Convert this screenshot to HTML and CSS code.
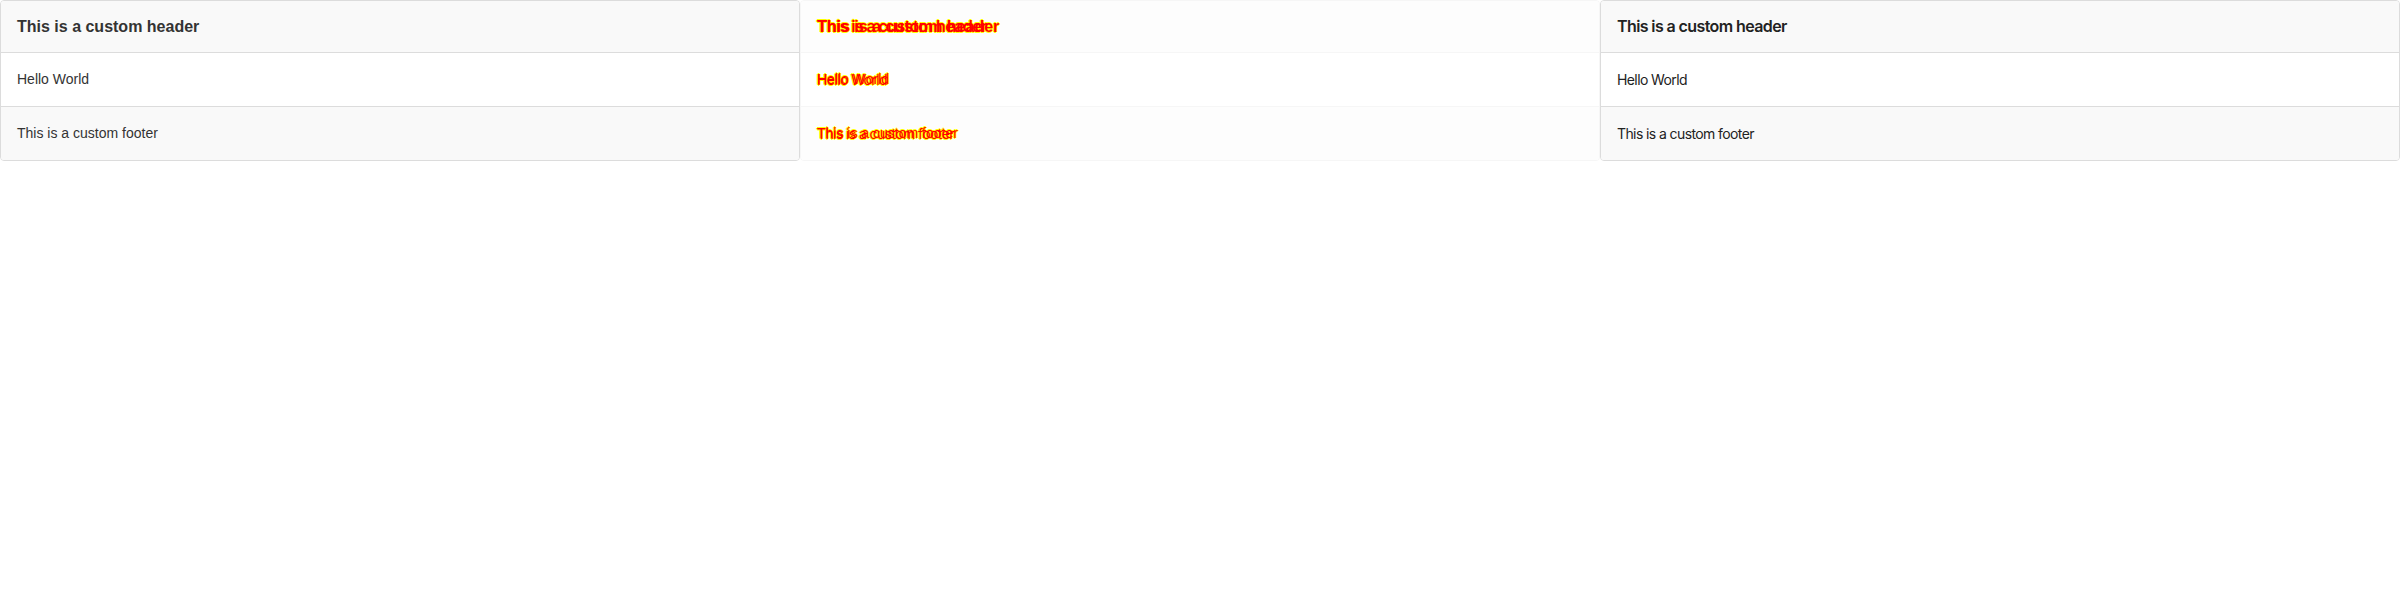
FILE: index.html
```html
<!DOCTYPE html>
<html>
<head>
<meta charset="utf-8">
<link rel="stylesheet" href="styles.css">
</head>
<body>
<div class="row">
  <div class="col">
    <div class="card card-a">
      <div class="card-header">This is a custom header</div>
      <div class="card-body">Hello World</div>
      <div class="card-footer">This is a custom footer</div>
    </div>
  </div>
  <div class="col">
    <div class="card card-diff">
      <div class="card-header">
        <div class="stack">
          <span class="ly sh fa">This is a custom header</span>
          <span class="ly sh fb">This is a custom header</span>
          <span class="ly rd fa">This is a custom header</span>
          <span class="ly rd fb">This is a custom header</span>
        </div>
      </div>
      <div class="card-body">
        <div class="stack">
          <span class="ly sh fa">Hello World</span>
          <span class="ly sh fb">Hello World</span>
          <span class="ly rd fa">Hello World</span>
          <span class="ly rd fb">Hello World</span>
        </div>
      </div>
      <div class="card-footer">
        <div class="stack">
          <span class="ly sh fa">This is a custom footer</span>
          <span class="ly sh fb">This is a custom footer</span>
          <span class="ly rd fa">This is a custom footer</span>
          <span class="ly rd fb">This is a custom footer</span>
        </div>
      </div>
    </div>
  </div>
  <div class="col">
    <div class="card card-b">
      <div class="card-header">This is a custom header</div>
      <div class="card-body">Hello World</div>
      <div class="card-footer">This is a custom footer</div>
    </div>
  </div>
</div>
</body>
</html>
```
FILE: styles.css
```css
html, body {
  margin: 0;
  padding: 0;
  background: #fff;
}
.row {
  display: flex;
  width: 2400px;
}
.col {
  width: 800px;
  flex: none;
}
.card {
  border: 1px solid #dcdcdc;
  border-radius: 4px;
  background: #fff;
  color: #333;
  overflow: hidden;
}
.card-header {
  background: #f9f9f9;
  border-bottom: 1px solid #dcdcdc;
  padding: 16px;
  font-size: 16px;
  line-height: 19px;
  font-weight: 700;
}
.card-body {
  padding: 16px;
  font-size: 14px;
  line-height: 21px;
}
.card-footer {
  background: #f9f9f9;
  border-top: 1px solid #dcdcdc;
  padding: 16px;
  font-size: 14px;
  line-height: 21px;
}
.card-a {
  font-family: "Liberation Sans", Arial, sans-serif;
}
.card-b {
  font-family: Inter, sans-serif;
  color: #222;
  letter-spacing: -0.6px;
}
.card-b .card-header {
  font-weight: 600;
}
.card-diff {
  border-color: #f6f6f6;
  background: #fff;
}
.card-diff .card-header,
.card-diff .card-footer {
  background: #fdfdfd;
  border-color: #f6f6f6;
}
.stack {
  display: grid;
  justify-items: start;
}
.ly {
  grid-area: 1 / 1;
  white-space: nowrap;
}
.fa {
  font-family: "Liberation Sans", Arial, sans-serif;
}
.fb {
  font-family: Inter, sans-serif;
  letter-spacing: -0.6px;
}
.card-diff .card-header .fb {
  font-weight: 600;
}
.sh {
  color: transparent;
  text-shadow: 1px 0 #ffff00, -1px 0 #ffff00, 0 1px #ffff00, 0 -1px #ffff00;
}
.rd {
  color: #ff0000;
}
```
